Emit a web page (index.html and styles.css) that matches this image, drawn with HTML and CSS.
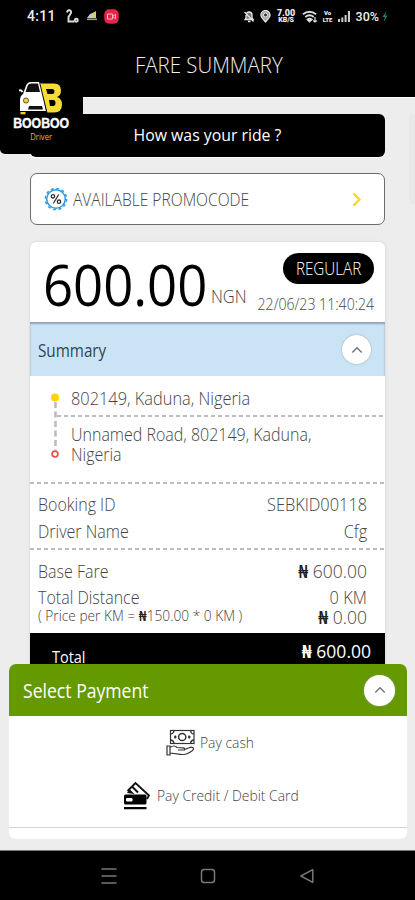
FILE: index.html
```html
<!DOCTYPE html>
<html lang="en">
<head>
<meta charset="utf-8">
<meta name="viewport" content="width=device-width, initial-scale=1">
<title>Fare Summary</title>
<link rel="stylesheet" href="styles.css">
</head>
<body>
<div class="phone">
  <header class="top">
    <div class="status">
      <span class="clock">4:11</span>
      <svg class="s-route" width="14" height="14" viewBox="0 0 14 14" fill="none" stroke="#ddd" stroke-width="1.9"><path d="M2 3.500Q2.500 1 4.500 1.300T6 4L3.500 8v4.500h6"/><circle cx="11.300" cy="11.200" r="1.500"/></svg>
      <svg class="s-app" width="12" height="11" viewBox="0 0 12 11"><path d="M1 7 4 3l5-2v6z" fill="#c9c9c9"/><path d="M7 2 10 0v7H7z" fill="#d8cf63"/><path d="M1 7.500h10v1.600H1z" fill="#999"/></svg>
      <svg class="s-rec" width="15" height="15" viewBox="0 0 15 15"><rect x=".3" y=".3" width="14.400" height="14.400" rx="5" fill="#e5264b"/><path d="M3.500 5h5v5h-5zM8.500 7.500l3-2.200v4.400z" fill="none" stroke="#f7b3c0" stroke-width="1"/></svg>
      <span class="grow"></span>
      <svg class="s-bell" width="12" height="13" viewBox="0 0 12 13"><path d="M2 9.500 3 8V5a3 3 0 0 1 6 0v3l1.200 1.500zM5 11.500h2.500M1.500 2l9 9.500" fill="#777" stroke="#e6e6e6" stroke-width="1.300"/></svg>
      <svg class="s-pin" width="11" height="13" viewBox="0 0 11 13"><path d="M5.500 12C2 8.500.9 7 .9 5.100a4.600 4.600 0 0 1 9.200 0C10.100 7 9 8.500 5.500 12z" fill="#aaa" stroke="#e8e8e8" stroke-width="1.200"/><circle cx="5.500" cy="5" r="2" fill="#333" stroke="#fff" stroke-width=".8"/></svg>
      <span class="speed"><b>7.00</b><b>KB/S</b></span>
      <svg class="s-wifi" width="16" height="13" viewBox="0 0 16 13" fill="none" stroke="#ddd" stroke-width="1.900"><path d="M1 4.200q6.500-5 13 0M3.300 7q4.200-3.300 8.400 0M5.600 9.500q2-1.600 4 0L7.500 11.500z"/><path d="M13 7v5M11.200 10.500l1.800 1.500 1.800-1.500" stroke-width="1.200"/></svg>
      <span class="lte"><b>Vo</b><b>LTE</b></span>
      <svg class="s-sig" width="12" height="12" viewBox="0 0 12 12"><path d="M0 9h2v3H0zM3.300 7.500h2V12h-2zM6.600 5h2v7h-2zM9.900 1H12v11H9.900z" fill="#ccc"/></svg>
      <span class="battery">30%</span>
      <svg class="s-bolt" width="6" height="11" viewBox="0 0 6 11"><path d="M4.500 0 .5 6h2.300L1.800 11 5.500 4.500H3.300z" fill="#2a7d5c"/></svg>
    </div>
    <h1 class="title">FARE SUMMARY</h1>
  </header>

  <main class="content">
    <div class="scroll-edge"></div>
    <button class="ride"><span>How was your ride ?</span></button>

    <div class="promo">
      <svg width="24" height="24" viewBox="0 0 24 24" fill="none"><circle cx="12" cy="12" r="9.300" stroke="#2e9be0" stroke-width="1.500"/><circle cx="12" cy="12" r="10.600" stroke="#2e9be0" stroke-width="1.500" stroke-dasharray="2.780 2.770"/><circle cx="9" cy="9.300" r="1.700" stroke="#333" stroke-width="1.300"/><circle cx="15" cy="14.700" r="1.700" stroke="#333" stroke-width="1.300"/><path d="m14.700 7.500-5.400 9" stroke="#333" stroke-width="1.300"/></svg>
      <span class="promo-text">AVAILABLE PROMOCODE</span>
      <svg class="promo-go" width="10" height="15" viewBox="0 0 10 15"><path d="m1.500 1.300 6 6.200-6 6.200" fill="none" stroke="#f5dc1c" stroke-width="2.400"/></svg>
    </div>

    <section class="card">
      <div class="fare">
        <span class="amount">600.00</span>
        <span class="currency">NGN</span>
        <div class="meta">
          <span class="pill"><span>REGULAR</span></span>
          <span class="date">22/06/23 11:40:24</span>
        </div>
      </div>
      <div class="summary">
        <span class="summary-text">Summary</span>
        <span class="toggle"><svg width="12" height="8" viewBox="0 0 12 8"><path d="m1.300 6.500 4.700-4.800 4.700 4.800" fill="none" stroke="#777" stroke-width="1.500"/></svg></span>
      </div>
      <div class="route">
        <svg class="track" width="10" height="68" viewBox="0 0 10 68"><path d="M5.500 10v48" stroke="#bbb" stroke-width="2.500" stroke-dasharray="6 3.500"/><circle cx="5" cy="5.500" r="4" fill="#ffd400"/><circle cx="5" cy="62" r="2.900" fill="#fff" stroke="#e8504c" stroke-width="1.700"/></svg>
        <div class="stops">
          <p class="from"><span>802149, Kaduna, Nigeria</span></p>
          <p class="to">Unnamed Road, 802149, Kaduna,<br>Nigeria</p>
        </div>
      </div>
      <dl class="rows booking">
        <div><dt>Booking ID</dt><dd>SEBKID00118</dd></div>
        <div><dt>Driver Name</dt><dd>Cfg</dd></div>
      </dl>
      <dl class="rows charges">
        <div><dt>Base Fare</dt><dd class="money"><b>₦</b> 600.00</dd></div>
        <div class="dist"><dt>Total Distance</dt><dd>0 KM</dd></div>
        <div class="price"><dt>( Price per KM = <b>₦</b>150.00 * 0 KM )</dt><dd class="money"><b>₦</b> 0.00</dd></div>
      </dl>
      <div class="total"><span class="total-label">Total</span><span class="total-value"><b>₦</b> 600.00</span></div>
    </section>

    <section class="sheet">
      <div class="sheet-head">
        <span class="sheet-title">Select Payment</span>
        <span class="toggle big"><svg width="12" height="8" viewBox="0 0 12 8"><path d="m1.300 6.500 4.700-4.800 4.700 4.800" fill="none" stroke="#777" stroke-width="1.500"/></svg></span>
      </div>
      <div class="pay cash">
        <svg width="30" height="28" viewBox="0 0 30 28" fill="none" stroke="#333" stroke-width="1.200"><rect x="4.500" y="1.500" width="23.500" height="13"/><circle cx="16.200" cy="8" r="3.600" stroke-width="1.500"/><path d="M4.500 5q3 0 3.500-3.500M24.500 1.500Q25 5 28 5M4.500 11q3 0 3.500 3.500M24.500 14.500Q25 11 28 11M8 8h2.500M9.200 6.500v3M22 8h2.500M23.200 6.500v3" stroke-width="1.400"/><path d="M1 17h3v9H1zM4 18.500q4-3 7 0l6 .3q2 .2 1.500 2.200H12M18.500 20.500l6-2.200q3-.5 3 1.500-.5 2-6 4.700-3 1.500-7 .8L4 24"/></svg>
        <span>Pay cash</span>
      </div>
      <div class="pay credit">
        <svg width="28" height="30" viewBox="0 0 28 30"><path d="M4.500 10 12.500 2 26 14.500l-2 3.500" fill="none" stroke="#111" stroke-width="1.800"/><path d="M4 12 6.500 8l5 5z" fill="#111"/><path d="M9 5.500l6 6" stroke="#111" stroke-width="2"/><rect x="1" y="13.500" width="22.500" height="10" rx="1.500" fill="#000"/><rect x="3" y="17" width="6.500" height="3.500" rx="1" fill="#fff"/><path d="M1 26h22.500v2.300H1z" fill="#000"/></svg>
        <span>Pay Credit / Debit Card</span>
      </div>
      <div class="sheet-foot"></div>
    </section>
  </main>

  <nav class="nav">
    <svg width="16" height="16" viewBox="0 0 16 16" stroke="#777" stroke-width="1.500"><path d="M.5 1h15M.5 8h15M.5 15h15"/></svg>
    <svg width="16" height="16" viewBox="0 0 16 16" fill="none" stroke="#777" stroke-width="1.500"><rect x="1.500" y="1.500" width="13" height="13" rx="2.500"/></svg>
    <svg width="16" height="16" viewBox="0 0 16 16" fill="none" stroke="#777" stroke-width="1.500"><path d="M13.800 1.700v12.600L1.800 8z" stroke-linejoin="round"/></svg>
  </nav>

  <div class="logo">
    <svg width="46" height="36" viewBox="0 0 46 36">
      <path d="M21 3.500h14q7 0 7 7 0 5-4 6.500 5 1.500 5 7.500 0 8-8 8H28z" fill="#f6dc37"/>
      <path d="M27 9h6.500q2 0 2 2.500t-2 2.500H28.500zM30 20h4q2.500 0 2.500 3t-2.500 3h-3z" fill="#000"/>
      <path d="M20 2H12Q8 2 6.500 7L4 14Q1 16 1 20v11h26L21 2z" fill="#fff"/>
      <path d="M9 5Q10 3.500 12 3.500h7l2 8.500H6.500z" fill="#111"/>
      <path d="M20.500 2l7.500 31" stroke="#111" stroke-width="1"/>
      <path d="M0 10.500q2-1 3.500 1.500" stroke="#fff" stroke-width="2" fill="none"/>
      <circle cx="7" cy="20.500" r="2.600" fill="#f1cf3a" stroke="#333" stroke-width=".8"/>
      <path d="M10 26h13l1 3.500H9z" fill="#111"/>
      <path d="M1.500 32h5v2.300h-5z" fill="#f1cf3a"/>
    </svg>
    <span class="logo-name">BOOBOO</span>
    <span class="logo-sub">Driver</span>
  </div>
</div>
</body>
</html>
```
FILE: styles.css
```css
* { box-sizing: border-box; margin: 0; padding: 0; }
body { background: #000; font-family: "Open Sans", "Noto Sans", sans-serif; font-weight: 300; }
.phone {
  --dash: repeating-linear-gradient(90deg, #bdbdbd 0 4px, transparent 4px 7px);
  position: relative; width: 415px; height: 900px; overflow: hidden; display: flex; flex-direction: column; background: #ededed; white-space: nowrap;
}
svg { display: block; flex: none; }
.grow { flex: 1; }

.top { height: 97px; background: #000; color: #eee; flex: none; }
.status { display: flex; align-items: center; height: 32px; padding: 0 29px 0 27px; font-family: Roboto, sans-serif; }
.clock { font-size: 14px; font-weight: 500; width: 38px; letter-spacing: .3px; }
.s-app { margin-left: 7px; }
.s-rec { margin-left: 6px; }
.s-pin { margin-left: 5px; }
.speed, .lte { display: flex; flex-direction: column; font-size: 8px; line-height: 7px; font-weight: 700; text-align: center; }
.speed { margin-left: 6px; width: 19px; }
.speed b { line-height: 8px; font-size: 9px; }
.speed b:last-child { font-size: 7px; line-height: 7px; }
.s-wifi { margin-left: 6px; }
.lte { margin-left: 5px; width: 10px; font-size: 6px; }
.s-sig { margin-left: 5px; }
.battery { font-size: 12.500px; font-weight: 500; margin-left: 6px; }
.s-bolt { margin-left: 3px; margin-right: -2px; }
.title { text-align: center; padding-left: 3px; font-size: 22px; font-weight: 300; line-height: 30px; margin-top: 17px; transform: scaleX(.93); }

.content { position: relative; flex: none; height: 753px; padding: 17px 30px 0; border-top: 1px solid #fff; overflow: hidden; }
.scroll-edge { position: absolute; right: 0; top: 16px; width: 6px; height: 90px; background: #e8e8e8; border-radius: 4px 0 0 4px; }
.ride { display: block; width: 355px; height: 43px; margin-top: -1px; padding-bottom: 2px; border: 0; border-radius: 6px; background: #000; color: #fff; font: inherit; font-size: 17px; font-weight: 500; text-align: center; box-shadow: 0 1px 1px #fff; }
.ride span { display: inline-block; transform: scaleX(.93); }
.promo { display: flex; align-items: center; height: 52px; margin-top: 16px; padding: 0 22px 0 13px; border: 1px solid #6c6c6c; border-radius: 7px; background: #fff; }
.promo-text { flex: 1; margin-left: 5px; font-size: 17.500px; transform: scaleX(.89); transform-origin: 0 50%; color: #444; }

.card { margin-top: 17px; height: 440px; background: #fff; border-radius: 6px 6px 0 0; box-shadow: 0 0 3px #ccc; }
.fare { display: flex; height: 80px; padding: 0 11px 0 13px; }
.amount { font-size: 56px; line-height: 84px; font-weight: 400; color: #000; width: 168px; transform: scaleX(.94); transform-origin: 0 50%; }
.currency { width: 36px; font-size: 18.500px; line-height: 26px; transform: scaleX(.89); transform-origin: 0 50%; color: #444; padding-top: 41px; }
.meta { flex: 1; display: flex; flex-direction: column; align-items: flex-end; width: 0; }
.pill { width: 91px; height: 31px; margin-top: 11px; border-radius: 16px; background: #000; color: #fff; font-size: 17.500px; line-height: 31px; text-align: center; }
.pill span { display: inline-block; transform: scaleX(.87); }
.date { font-size: 15.500px; transform: scaleX(.91); transform-origin: 100% 50%; line-height: 20px; margin-top: 10px; color: #444; }
.summary { display: flex; align-items: center; justify-content: space-between; height: 54px; padding: 1px 14px 0 8px; background: #cae4f6; box-shadow: inset 0 2px 2px #8fa4b2; }
.summary-text { font-size: 17.500px; transform: scaleX(.87); transform-origin: 0 50%; font-weight: 400; color: #2f4452; }
.toggle { display: flex; align-items: center; justify-content: center; width: 29px; height: 29px; border-radius: 50%; background: #fff; box-shadow: 0 0 2px #999; }
.toggle.big { width: 31px; height: 31px; }

.route, .from, .booking { background: var(--dash) 0 100% / 100% 2px no-repeat; }
.route { display: flex; height: 108px; padding: 16px 0 0 20px; color: #444; font-size: 17.500px; }
.stops { flex: 1; }
.from { height: 25px; line-height: 12px; padding-left: 14px; margin-left: -3px; }
.from span { display: inline-block; transform: scaleX(.935); transform-origin: 0 50%; }
.to { padding: 7px 0 0 11px; line-height: 20px; transform: scaleX(.914); transform-origin: 11px 50%; }
.rows { color: #444; font-size: 17.500px; padding: 0 18px 0 8px; }
.rows dt { transform: scaleX(.915); transform-origin: 0 50%; }
.rows dd { transform: scaleX(.935); transform-origin: 100% 50%; }
.rows div { display: flex; justify-content: space-between; height: 27px; line-height: 27px; }
.booking { height: 66px; padding-top: 7px; }
.charges { height: 83px; padding-top: 8px; }
.rows .dist { height: 21px; line-height: 25px; }
.rows .price { height: 20px; line-height: 22px; }
.price dt { font-size: 15px; line-height: 19px; }
.rows .money { transform: none; }
.rows b { color: #222; font-weight: 600; }
.total { display: flex; justify-content: space-between; height: 50px; padding: 3px 14px 0 22px; background: #000; color: #fff; font-size: 17.500px; line-height: 30px; }
.total-label { padding-top: 6px; font-size: 17px; transform: scaleX(.85); transform-origin: 0 50%; font-weight: 500; }
.total-value { font-weight: 400; }

.sheet { position: absolute; left: 9px; right: 8px; top: 566px; height: 175px; background: #fff; border-radius: 7px; overflow: hidden; }
.sheet-head { display: flex; align-items: center; justify-content: space-between; height: 52px; padding: 0 12px 0 14px; background: #659900; color: #fff; font-size: 20px; font-weight: 400; }
.sheet-title { transform: scaleX(.88); transform-origin: 0 50%; }
.pay { display: flex; align-items: center; height: 53px; color: #444; font-size: 15px; }
.pay span { margin-top: -2px; transform: scaleX(.925); transform-origin: 0 50%; }
.cash { padding-left: 157px; gap: 4px; }
.credit { padding-left: 114px; gap: 6px; }
.sheet-foot { margin-top: 5px; border-top: 1px solid #d5d5d5; }

.nav { display: flex; align-items: center; gap: 83px; height: 50px; padding: 1px 0 0 101px; background: #000; border-top: 1px solid #777; }

.logo { position: absolute; left: 0; top: 76px; width: 83px; height: 78px; padding-top: 4px; background: #000; border-radius: 0 0 0 5px; display: flex; flex-direction: column; align-items: center; }
.logo-name { font: 700 15px/14px "Liberation Sans", sans-serif; color: #fff; transform: scaleX(.82); -webkit-text-stroke: .4px #fff; }
.logo-sub { font: 500 8.500px/12px "Open Sans", sans-serif; color: #d9bd35; padding-top: 1px; transform: scaleX(.9); }
```
